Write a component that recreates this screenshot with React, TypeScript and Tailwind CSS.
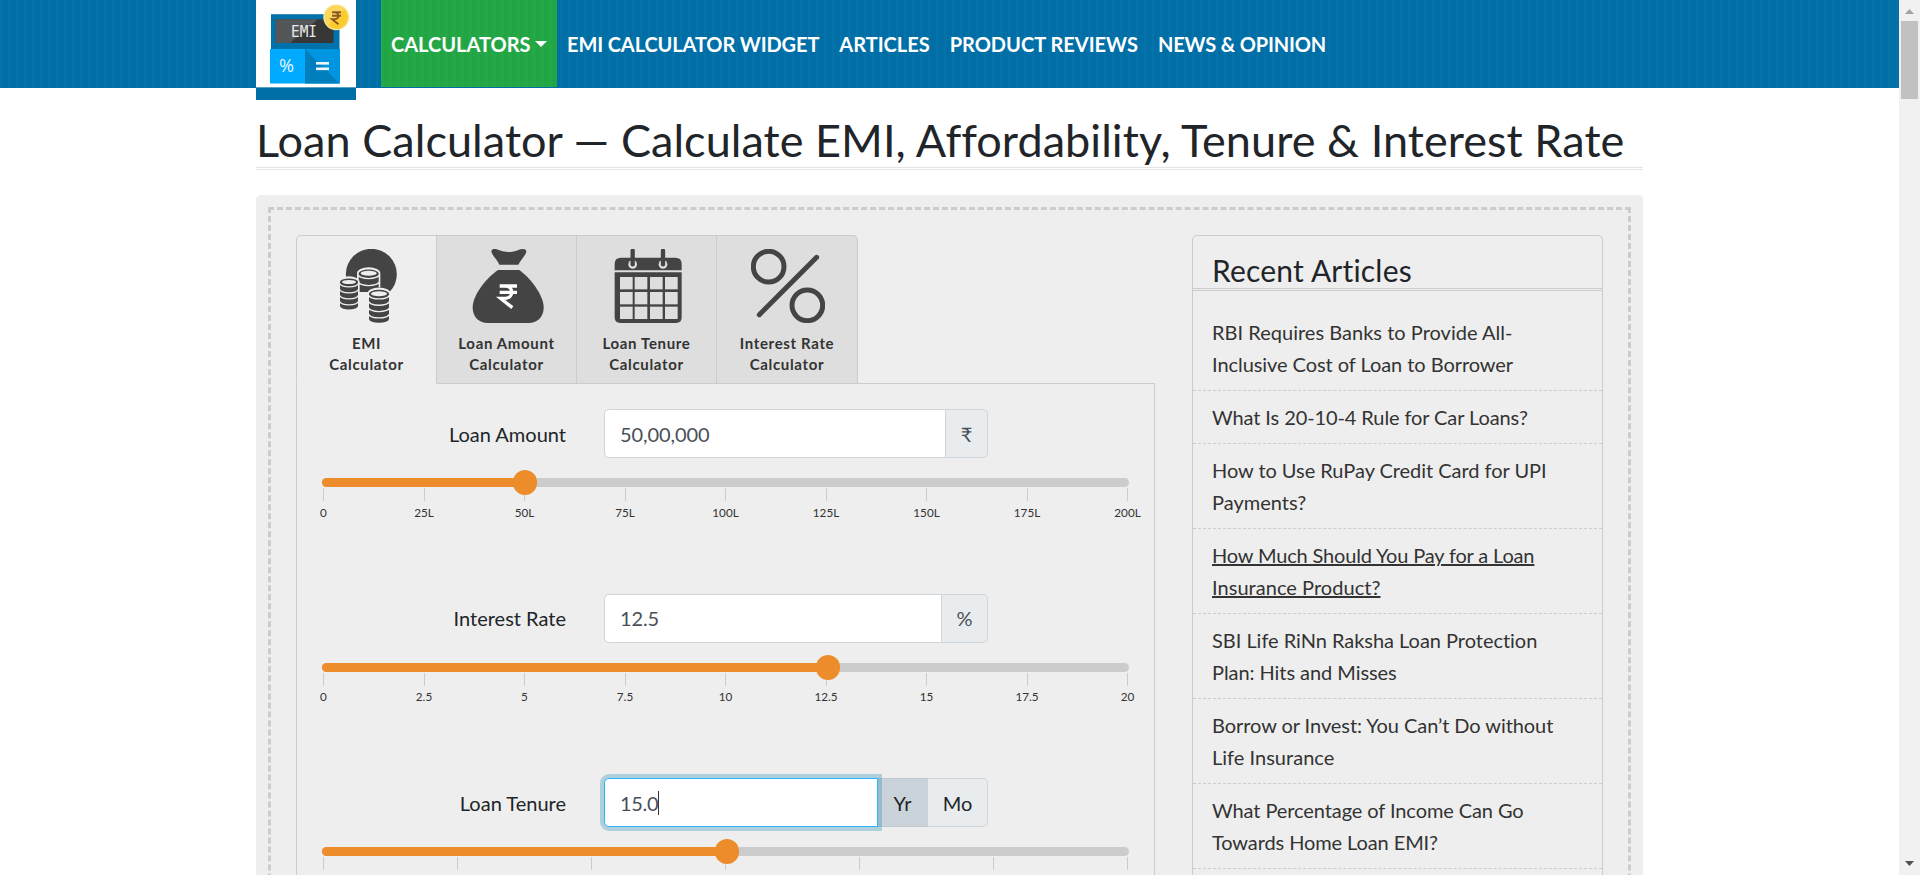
import type { ReactNode } from "react";

function Logo() {
  return (
    <svg viewBox="0 0 100 88" className="block h-[88px] w-[100px] font-normal">
      <rect width="100" height="87" fill="#fff" />
      <rect y="87" width="100" height="1" fill="#5a9fc6" />
      <rect x="15" y="14" width="68.5" height="35" fill="#0072ab" />
      <path d="M15 14h68.500v.7H15z" fill="#4c93bb" />
      <rect x="19.700" y="19.300" width="57.800" height="23.700" fill="#373737" />
      <path d="M19.700 19.300h42L34 43H19.700z" fill="#555657" />
      <rect x="14" y="49" width="35" height="34.500" fill="#00aaff" />
      <rect x="49" y="49" width="35" height="34.500" fill="#0095e0" />
      <path d="M49 49l34.500 34.500H49z" fill="#007fbf" />
      <rect x="60" y="62" width="13" height="2.600" fill="#eef6fb" />
      <rect x="60" y="67.500" width="13" height="2.600" fill="#eef6fb" />
      <text x="48" y="36.500" textAnchor="middle" fontSize="15.500" textLength="26" lengthAdjust="spacingAndGlyphs" fill="#e8e8e8" className="font-['DejaVu_Sans_Mono',monospace]">EMI</text>
      <text x="30.500" y="71.500" textAnchor="middle" fontSize="18" textLength="15" lengthAdjust="spacingAndGlyphs" fill="#e6f6ff" className="font-['Open_Sans',sans-serif]">%</text>
      <circle cx="80.300" cy="17.300" r="13" fill="#fbe59a" />
      <circle cx="80.300" cy="17.300" r="11.600" fill="#fccb30" />
      <path d="M72.100 25.500a11.600 11.600 0 0 1 16.400-16.400z" fill="#fdd85c" />
      <path d="M76 12.300h9M76 15.800h9M76 12.300h2.500c5 0 5 6.900 0 6.900H76l6.500 5" fill="none" stroke="#8a5a24" strokeWidth="1.900" />
    </svg>
  );
}

function CoinStack({ cx, top, rx, layers, gap }: { cx: number; top: number; rx: number; layers: number; gap: number }) {
  const ry = rx * 0.38;
  const l = cx - rx;
  const r = cx + rx;
  const end = top + layers * gap;
  return (
    <g>
      <path d={`M${l - 5} ${top}A${rx + 5} ${ry + 7} 0 0 1 ${r + 5} ${top}V${end}H${l - 5}z`} fill="#eee" />
      <path d={`M${l} ${top}A${rx} ${ry} 0 0 1 ${r} ${top}V${end}A${rx} ${ry} 0 0 1 ${l} ${end}z`} fill="#444" />
      <ellipse cx={cx} cy={top} rx={rx - 6} ry={ry - 4} fill="#eee" />
      {Array.from({ length: layers }, (_, i) => (
        <path
          key={i}
          d={`M${l - 1} ${top + 4 + i * gap}A${rx} ${ry} 0 0 0 ${r + 1} ${top + 4 + i * gap}`}
          fill="none"
          stroke="#eee"
          strokeWidth="4"
        />
      ))}
    </g>
  );
}

function CoinsIcon() {
  return (
    <svg viewBox="239 177 222 222" className="size-[74px]">
      <circle cx="363" cy="253" r="76.500" fill="#444" />
      <path d="M270 306H358V400H270z" fill="#eee" />
      <CoinStack cx={355} top={250} rx={30} layers={2} gap={21} />
      <CoinStack cx={296} top={276} rx={27} layers={4} gap={18} />
      <CoinStack cx={386} top={311} rx={30} layers={4} gap={19} />
    </svg>
  );
}

function BagIcon() {
  return (
    <svg viewBox="661 177 222 222" className="ml-[2px] size-[74px]">
      <path d="M722 184C724 174 736 177 746 181C765 188 783 188 803 180C813 176 827 175 827 185C825 195 811 209 803 224H746C740 209 724 197 722 184z" fill="#444" />
      <path d="M742 240H806C836 262 879 313 879 353C879 383 857 399 835 399H710C688 399 666 383 666 353C666 313 710 262 742 240z" fill="#444" />
      <path d="M747 288H799M747 307H799M748 288H763C790 288 790 325 763 325H750L785 353" fill="none" stroke="#fff" strokeWidth="10" />
    </svg>
  );
}

function CalendarIcon() {
  return (
    <svg viewBox="153 87 222 222" className="ml-[3px] size-[74px]">
      <path d="M164 151V132Q164 113 183 113H346Q365 113 365 132V151z" fill="#444" />
      <path d="M164 157H365V292Q365 309 348 309H181Q164 309 164 292z" fill="#444" />
      {[218, 309].map((x) => (
        <g key={x}>
          <circle cx={x} cy="133" r="13" fill="#dedede" />
          <path d={`M${x} 92V133`} stroke="#444" strokeWidth="13" strokeLinecap="round" />
        </g>
      ))}
      {[171, 216, 260].map((y) => [180, 224, 270, 315].map((x) => <rect key={`${x}-${y}`} x={x} y={y} width="38" height="37" fill="#dedede" />))}
    </svg>
  );
}

function PercentIcon() {
  return (
    <svg viewBox="573 87 222 222" className="ml-[2px] size-[74px]" fill="none" stroke="#444" strokeWidth="15" strokeLinecap="round">
      <circle cx="626" cy="140" r="46" />
      <circle cx="742" cy="256" r="46" />
      <path d="M598 284L770 112" />
    </svg>
  );
}

const tabs: { line1: string; icon: ReactNode; style: string }[] = [
  { line1: "EMI", icon: <CoinsIcon />, style: "w-[141px] rounded-tl-[5px] border-l border-b-[#eee] bg-[#eee]" },
  { line1: "Loan Amount", icon: <BagIcon />, style: "w-[140px] bg-[#dedede]" },
  { line1: "Loan Tenure", icon: <CalendarIcon />, style: "w-[140px] bg-[#dedede]" },
  { line1: "Interest Rate", icon: <PercentIcon />, style: "w-[141px] rounded-tr-[5px] bg-[#dedede]" },
];

const navItems = [
  { text: "EMI CALCULATOR WIDGET", tracking: "tracking-[-0.11px]" },
  { text: "ARTICLES", tracking: "" },
  { text: "PRODUCT REVIEWS", tracking: "" },
  { text: "NEWS & OPINION", tracking: "tracking-[-0.15px]" },
];

function Slider({ percent, ticks, labels }: { percent: number; ticks: number; labels?: string[] }) {
  return (
    <div className="ml-[25px] mt-5 w-[807px]">
      <div className="relative h-[9px] rounded-[5px] bg-[#ccc]">
        <div className="h-full rounded-[5px] bg-[#ed8c2b]" style={{ width: `${percent}%` }} />
        <div className="absolute -top-2 z-10 -ml-[10.700px] h-[25px] w-6 rounded-full bg-[#ed8c2b]" style={{ left: `${percent}%` }} />
      </div>
      <div className="mt-px flex justify-between px-[1.500px]">
        {Array.from({ length: ticks }, (_, i) => (
          <div key={i} className="flex w-0 flex-col items-center whitespace-nowrap">
            <div className="h-[13px] w-px shrink-0 bg-[#ccc]" />
            {labels && <span className="mt-[3.500px] text-[11.700px] leading-[14px] text-[#333]">{labels[i]}</span>}
          </div>
        ))}
      </div>
    </div>
  );
}

function Field({ label, children, slider }: { label: string; children: ReactNode; slider: ReactNode }) {
  return (
    <div className="h-[184.500px]">
      <div className="flex h-[49px] items-center">
        <div className="w-[269px] text-right leading-8">{label}</div>
        <div className="ml-[38px] flex h-[49px] w-[384px]">{children}</div>
      </div>
      {slider}
    </div>
  );
}

const inputStyle = "flex flex-1 items-center rounded-l-[5px] border border-[#ced4da] bg-white pl-[15px] tracking-[-0.1px] text-[#495057]";
const addonStyle = "flex items-center justify-center rounded-r-[5px] border border-l-0 border-[#ced4da] bg-[#e9ecef] text-[#495057]";

const articles: { lines: string[]; tracking: string[]; hovered?: boolean }[] = [
  { lines: ["RBI Requires Banks to Provide All-", "Inclusive Cost of Loan to Borrower"], tracking: ["tracking-[0.02px]", "tracking-[-0.06px]"] },
  { lines: ["What Is 20-10-4 Rule for Car Loans?"], tracking: ["tracking-[-0.1px]"] },
  { lines: ["How to Use RuPay Credit Card for UPI", "Payments?"], tracking: ["tracking-[-0.04px]", "tracking-normal"] },
  { lines: ["How Much Should You Pay for a Loan", "Insurance Product?"], tracking: ["tracking-[-0.16px]", "tracking-[0.04px]"], hovered: true },
  { lines: ["SBI Life RiNn Raksha Loan Protection", "Plan: Hits and Misses"], tracking: ["tracking-[-0.03px]", "tracking-[-0.06px]"] },
  { lines: ["Borrow or Invest: You Can’t Do without", "Life Insurance"], tracking: ["tracking-[-0.06px]", "tracking-[0.02px]"] },
  { lines: ["What Percentage of Income Can Go", "Towards Home Loan EMI?"], tracking: ["tracking-[-0.09px]", "tracking-[-0.1px]"] },
];

export default function App() {
  return (
    <div className="flex h-[875px] w-[1920px] overflow-hidden bg-white font-['Lato',sans-serif] text-[20px] text-[#212529] [font-variant-ligatures:none]">
      <div className="h-[875px] w-[1899px] overflow-hidden">
        <header className="h-[88px] bg-[#006fa8] bg-[repeating-linear-gradient(90deg,rgba(255,255,255,0.02)_0_2px,rgba(0,0,0,0.015)_3px_5px,transparent_6px_8px)] pl-[256px]">
          <nav className="flex h-[88px] font-bold text-white">
            <div className="h-[100px] w-[100px] shrink-0 bg-[#006fa8]">
              <Logo />
            </div>
            <a className="ml-[25px] flex h-[87px] w-[176px] items-center bg-[#22a745] bg-[repeating-linear-gradient(90deg,rgba(255,255,255,0.02)_0_2px,rgba(0,0,0,0.015)_3px_5px,transparent_6px_8px)] pl-[10px] pt-px">
              CALCULATORS
              <span className="ml-[5px] border-x-[6px] border-t-[6px] border-x-transparent border-t-white" />
            </a>
            {navItems.map((item) => (
              <a key={item.text} className={`flex items-center px-[10px] ${item.tracking}`}>{item.text}</a>
            ))}
          </nav>
        </header>

        <main className="ml-[256px] w-[1387px] pt-[25px]">
          <h1 className="h-[57px] whitespace-nowrap border-b-3 border-double border-[#e5e5e5] text-[45px] leading-[54px] tracking-[0.050px]">
            Loan Calculator — Calculate EMI, Affordability, Tenure &amp; Interest Rate
          </h1>

          <div className="mt-[25px] h-[1300px] rounded-[5px] bg-[#eee] p-3">
            <div className="flex h-full border-3 border-dashed border-[#ccc] pl-[25px] pt-[25px]">
              <section className="w-[859px]">
                <div className="relative z-10 -mb-px flex">
                  {tabs.map((tab) => (
                    <div key={tab.line1} className={`flex h-[149px] flex-col items-center border-y border-r border-[#ccc] pt-[13px] ${tab.style}`}>
                      {tab.icon}
                      <div className="mt-[10px] whitespace-nowrap text-center text-[15px] font-bold leading-[21px] tracking-[0.650px] text-[#333]">
                        {tab.line1}
                        <br />
                        Calculator
                      </div>
                    </div>
                  ))}
                </div>
                <div className="h-[1000px] border border-[#ccc] pt-[25px]">
                  <Field label="Loan Amount" slider={<Slider percent={25} ticks={9} labels={["0", "25L", "50L", "75L", "100L", "125L", "150L", "175L", "200L"]} />}>
                    <div className={inputStyle}>50,00,000</div>
                    <div className={`${addonStyle} w-[42px]`}>₹</div>
                  </Field>
                  <Field label="Interest Rate" slider={<Slider percent={62.5} ticks={9} labels={["0", "2.5", "5", "7.5", "10", "12.5", "15", "17.5", "20"]} />}>
                    <div className={inputStyle}>12.5</div>
                    <div className={`${addonStyle} w-[46px]`}>%</div>
                  </Field>
                  <Field label="Loan Tenure" slider={<Slider percent={50} ticks={7} />}>
                    <div className="z-10 flex w-[274px] items-center rounded-l-[5px] border border-[#29b6ff] bg-white pl-[15px] tracking-[-0.300px] text-[#495057] shadow-[0_0_0_4px_rgba(0,119,170,0.26)]">
                      15.0
                      <span className="h-6 w-px bg-[#333]" />
                    </div>
                    <div className="flex w-[50px] items-center justify-center border-y border-[#c1c9d0] bg-[#cbd3da] pr-[1px]">Yr</div>
                    <div className="flex w-[60px] items-center justify-center rounded-r-[5px] border border-l-0 border-[#ced4da] bg-[#e9ecef]">Mo</div>
                  </Field>
                </div>
              </section>

              <aside className="ml-[37px] h-[1100px] w-[411px] rounded-[5px] border border-[#ccc]">
                <h2 className="border-b-3 border-double border-[#ccc] pl-[19px] pt-4 text-[30px] leading-[36px] tracking-[0.200px]">Recent Articles</h2>
                <ul className="pt-[15px] text-[#333]">
                  {articles.map(({ lines, tracking, hovered }) => (
                    <li key={lines[0]} className={`border-b border-dashed border-[#ccc] py-[10px] pl-[19px] leading-8 ${hovered ? "underline" : ""}`}>
                      {lines.map((line, i) => (
                        <span key={line} className={`block whitespace-nowrap ${tracking[i]}`}>{line}</span>
                      ))}
                    </li>
                  ))}
                </ul>
              </aside>
            </div>
          </div>
        </main>
      </div>

      <div className="flex h-[875px] w-[21px] flex-col items-center bg-[#f1f1f1]">
        <svg viewBox="0 0 9 5" className="mt-[9px] h-[5px] w-[9px] shrink-0"><path d="M0 5L4.500 0L9 5z" fill="#a3a3a3" /></svg>
        <div className="mt-[7px] h-[78px] w-[17px] shrink-0 bg-[#c1c1c1]" />
        <svg viewBox="0 0 9 5" className="mb-[9px] mt-auto h-[5px] w-[9px] shrink-0"><path d="M0 0L4.500 5L9 0z" fill="#505050" /></svg>
      </div>
    </div>
  );
}
